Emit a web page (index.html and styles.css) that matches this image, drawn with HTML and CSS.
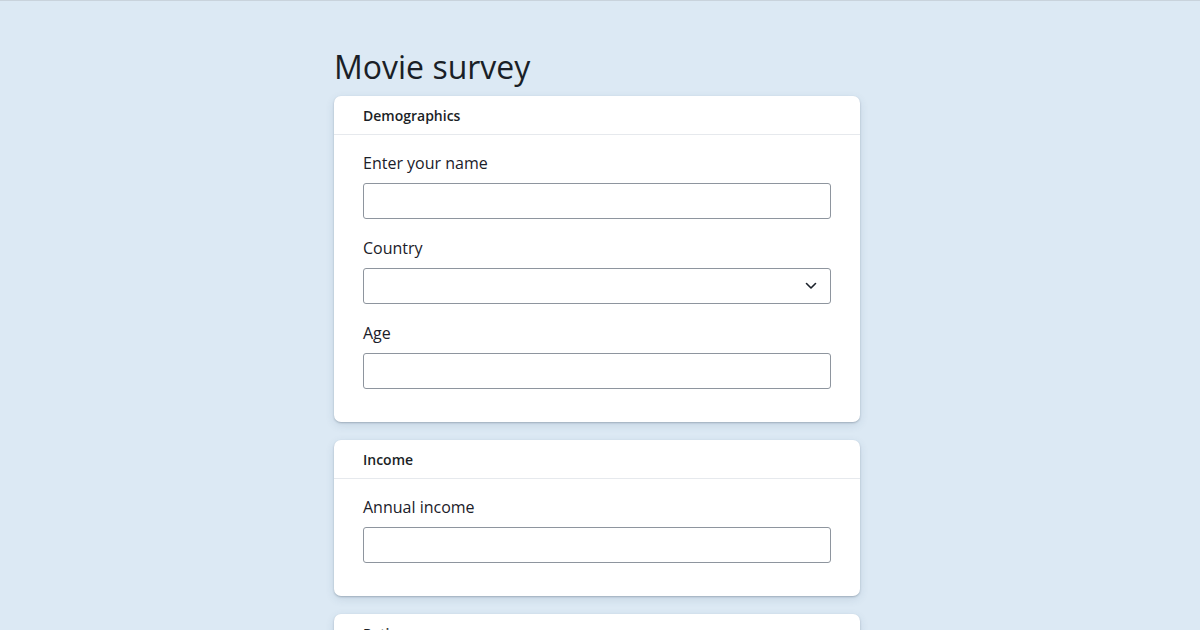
FILE: index.html
```html
<!DOCTYPE html>
<html lang="en">
<head>
<meta charset="utf-8">
<title>Movie survey</title>
<link rel="stylesheet" href="styles.css">
</head>
<body>
<main class="page">
  <h1 class="title">Movie survey</h1>

  <section class="card">
    <header class="card-head">Demographics</header>
    <div class="card-body">
      <div class="field">
        <label class="label" for="name">Enter your name</label>
        <input class="input" id="name" type="text">
      </div>
      <div class="field">
        <label class="label" for="country">Country</label>
        <div class="select">
          <select class="input select-input" id="country"><option></option></select>
          <svg class="chevron" width="12" height="8" viewBox="0 0 12 8"><path d="M1.5 1.5 L6 6 L10.5 1.5" fill="none" stroke="#1c222b" stroke-width="1.6" stroke-linecap="round" stroke-linejoin="round"/></svg>
        </div>
      </div>
      <div class="field">
        <label class="label" for="age">Age</label>
        <input class="input" id="age" type="text">
      </div>
    </div>
  </section>

  <section class="card">
    <header class="card-head">Income</header>
    <div class="card-body">
      <div class="field">
        <label class="label" for="income">Annual income</label>
        <input class="input" id="income" type="text">
      </div>
    </div>
  </section>

  <section class="card">
    <header class="card-head">Ratings</header>
    <div class="card-body">
      <div class="field">
        <label class="label">Favourite movie</label>
        <input class="input" type="text">
      </div>
    </div>
  </section>
</main>
</body>
</html>
```

FILE: styles.css
```css
html, body {
  margin: 0;
  padding: 0;
}
body {
  background: #dce9f4;
  border-top: 1px solid #c9d3dc;
  font-family: "Open Sans", "Noto Sans", sans-serif;
  color: #1b2029;
  height: 629px;
  overflow: hidden;
}
.page {
  width: 532px;
  margin: 0 auto;
  padding-top: 44px;
  display: flex;
  flex-direction: column;
  gap: 18px;
}
.title {
  margin: 0 0 -11px 0;
  font-size: 32px;
  font-weight: 400;
  line-height: 44px;
  color: #1a1f27;
  letter-spacing: 0;
}
.card {
  width: 526px;
  background: #fff;
  border-radius: 7px;
  box-shadow: 0 1px 2px rgba(40, 55, 75, 0.28), 0 3px 10px rgba(40, 70, 110, 0.12);
  flex-shrink: 0;
}
.card-head {
  height: 39px;
  box-sizing: border-box;
  padding: 0 29px;
  display: flex;
  align-items: center;
  font-size: 14px;
  font-weight: 600;
  color: #1b1f26;
  border-bottom: 1px solid #e6e9ed;
}
.card-body {
  padding: 16px 29px 33px;
  display: flex;
  flex-direction: column;
  gap: 17px;
}
.field {
  display: flex;
  flex-direction: column;
  gap: 8px;
}
.label {
  font-size: 16px;
  line-height: 24px;
  color: #1b2029;
}
.input {
  width: 468px;
  height: 36px;
  box-sizing: border-box;
  border: 1px solid #8e959e;
  border-radius: 3px;
  background: #fff;
  font: inherit;
  margin: 0;
  padding: 0 10px;
}
.select {
  position: relative;
  width: 468px;
}
.select-input {
  appearance: none;
  -webkit-appearance: none;
}
.chevron {
  position: absolute;
  right: 14px;
  top: 14px;
  pointer-events: none;
}
```
